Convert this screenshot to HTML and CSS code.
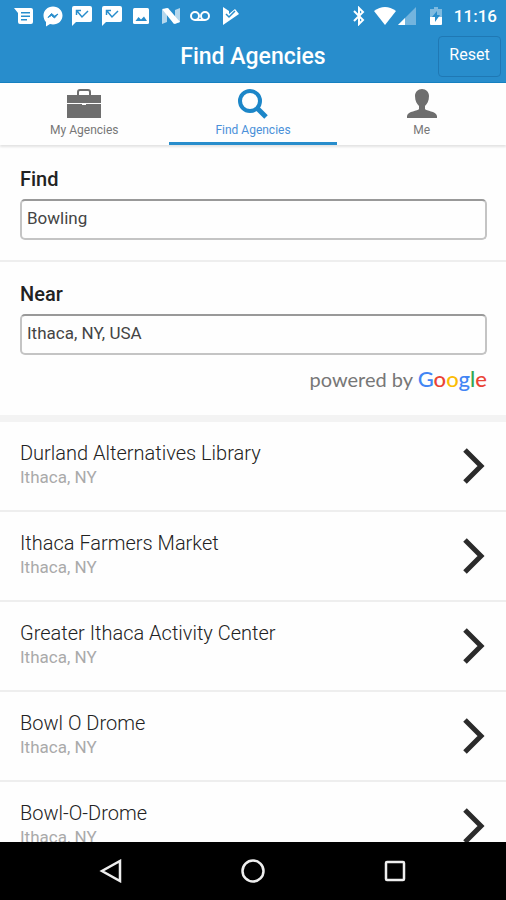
FILE: index.html
```html
<!DOCTYPE html>
<html lang="en">
<head>
    <meta charset="UTF-8">
    <meta name="viewport" content="width=device-width, initial-scale=1">
    <title>Find Agencies</title>
    <link rel="stylesheet" href="styles.css">
</head>
<body>
    <div id="app">
        <div class="status-bar">
            <div class="notifications">
                <svg viewBox="0 0 22 22"><path fill="#fff" fill-rule="evenodd" d="M2 3h17q2 0 2 2v12q0 2-2 2H8q-2 0-2-2V8zM9 7v1.500h9V7zM9 10.500V12h9v-1.500zM9 14v1.500h6V14z"/></svg>
                <svg viewBox="0 0 22 22"><path fill="#fff" d="M11 1.500c5.500 0 9.500 4 9.500 9s-4 9-9.500 9c-1 0-2-.1-3-.4L4 21.500V17c-1.600-1.600-2.500-4-2.500-6.500 0-5 4-9 9.500-9z"/><path d="M6 12.500l3.500-4 3 2.500 3.500-2-3.500 4-3-2.500z" fill="#288dcc" stroke="#288dcc"/></svg>
                <svg viewBox="0 0 22 22"><path fill="#fff" d="M3 1h16q2 0 2 2v12q0 2-2 2H5l-4 4V3q0-2 2-2z"/><path fill="none" stroke="#288dcc" stroke-width="1.500" d="M5.500 10V5.500H10M6 6l5 6 6-6"/></svg>
                <svg viewBox="0 0 22 22"><path fill="#fff" d="M3 1h16q2 0 2 2v12q0 2-2 2H5l-4 4V3q0-2 2-2z"/><path fill="none" stroke="#288dcc" stroke-width="1.500" d="M5.500 10V5.500H10M6 6l5 6 6-6"/></svg>
                <svg viewBox="0 0 22 22"><rect x="3" y="3" width="16" height="16" rx="1.500" fill="#fff"/><path fill="#288dcc" d="M5.500 16l3-4 2.500 2.500 3-3 3 4.500z"/></svg>
                <svg viewBox="0 0 22 22"><path fill="#fff" opacity=".65" d="M2 5l5-2v14l-5 2zM15 5l5-2v14l-5 2z"/><path fill="#fff" d="M2 4l6-1 12 14-6 2z"/></svg>
                <svg viewBox="0 0 22 22"><g fill="none" stroke="#fff" stroke-width="2"><circle cx="6" cy="11" r="4"/><circle cx="16" cy="11" r="4"/><path d="M6 15h10"/></g></svg>
                <svg viewBox="0 0 22 22"><path fill="#fff" d="M4 2l6 4v3l6-5 4 5L4 20z"/><path fill="none" stroke="#288dcc" stroke-width="1.500" d="M7 9l3 3 6-6"/></svg>
            </div>
            <div class="indicators">
                <svg width="12" height="20" viewBox="0 0 12 20"><path fill="none" stroke="#fff" stroke-width="2" d="M1 5l9 9-4 4V2l4 4-9 9"/></svg>
                <svg class="wifi" width="22" height="18" viewBox="0 0 22 18"><path fill="#fff" d="M0 4q11-8 22 0L11 18z"/></svg>
                <svg class="signal" width="18" height="18" viewBox="0 0 18 18"><path fill="#fff" opacity=".35" d="M18 0v18H0z"/><path fill="#fff" d="M7 11v7H0z"/></svg>
                <svg class="battery" width="12" height="18" viewBox="0 0 12 18"><path fill="#fff" opacity=".4" d="M4 0h4v2h4v8H0V2h4z"/><path fill="#fff" d="M0 10h12v7q0 1-1 1H1q-1 0-1-1z"/><path fill="#288dcc" d="M7 4l-5 6h3v5l5-7H7z"/></svg>
                <span class="clock">11:16</span>
            </div>
        </div>

        <header class="header">
            <h1>Find Agencies</h1>
            <button type="button" class="reset">Reset</button>
        </header>

        <nav class="tabs">
            <a href="#my-agencies">
                <svg width="36" height="32" viewBox="0 0 36 32"><path fill="none" stroke="#6e6e6e" stroke-width="2" d="M12 7V4q0-2 2-2h8q2 0 2 2v3"/><path fill="#6e6e6e" d="M1 7h34v8H1zM1 16h15v1h4v-1h15v14H1z"/></svg>
                <span>My Agencies</span>
            </a>
            <a href="#find" class="active">
                <svg width="36" height="32" viewBox="0 0 36 32"><g fill="none" stroke="#1c86c8" stroke-width="4"><circle cx="15" cy="13" r="10"/><path stroke-width="5" d="M22 20l9 9"/></g></svg>
                <span>Find Agencies</span>
            </a>
            <a href="#me">
                <svg width="36" height="32" viewBox="0 0 36 32"><path fill="#6e6e6e" d="M18 1c4 0 7 3 7 7 0 5-2 8-4 10v3c1 2 11 2 12 7v2H3v-2c1-5 11-5 12-7v-3c-2-2-4-5-4-10 0-4 3-7 7-7z"/></svg>
                <span>Me</span>
            </a>
        </nav>

        <main class="content">
            <form class="search">
                <div class="field">
                    <label for="find">Find</label>
                    <input type="text" id="find" value="Bowling">
                </div>
                <div class="field">
                    <label for="near">Near</label>
                    <input type="text" id="near" value="Ithaca, NY, USA">
                    <p class="powered">powered by <span class="google"><span class="blue">G</span><span class="red">o</span><span class="yellow">o</span><span class="blue">g</span><span class="green">l</span><span class="red">e</span></span></p>
                </div>
            </form>

            <ul class="results">
                <li><a href="#durland">
                    <div><h2>Durland Alternatives Library</h2><p>Ithaca, NY</p></div>
                    <svg width="22" height="36" viewBox="0 0 22 36"><path d="M2 2l16 16L2 34"/></svg>
                </a></li>
                <li><a href="#market">
                    <div><h2>Ithaca Farmers Market</h2><p>Ithaca, NY</p></div>
                    <svg width="22" height="36" viewBox="0 0 22 36"><path d="M2 2l16 16L2 34"/></svg>
                </a></li>
                <li><a href="#activity-center">
                    <div><h2>Greater Ithaca Activity Center</h2><p>Ithaca, NY</p></div>
                    <svg width="22" height="36" viewBox="0 0 22 36"><path d="M2 2l16 16L2 34"/></svg>
                </a></li>
                <li><a href="#bowl-o-drome">
                    <div><h2>Bowl O Drome</h2><p>Ithaca, NY</p></div>
                    <svg width="22" height="36" viewBox="0 0 22 36"><path d="M2 2l16 16L2 34"/></svg>
                </a></li>
                <li><a href="#bowl-o-drome-2">
                    <div><h2>Bowl-O-Drome</h2><p>Ithaca, NY</p></div>
                    <svg width="22" height="36" viewBox="0 0 22 36"><path d="M2 2l16 16L2 34"/></svg>
                </a></li>
            </ul>
        </main>

        <div class="nav-bar">
            <button type="button" aria-label="Back"><svg width="24" height="24" viewBox="0 0 24 24"><path d="M21 2v20L3 12z"/></svg></button>
            <button type="button" aria-label="Home"><svg width="24" height="24" viewBox="0 0 24 24"><circle cx="12" cy="12" r="10.500"/></svg></button>
            <button type="button" aria-label="Recent apps"><svg width="24" height="24" viewBox="0 0 24 24"><rect x="3" y="3" width="18" height="18" rx="1"/></svg></button>
        </div>
    </div>
</body>
</html>
```
FILE: styles.css
```css
* {
    box-sizing: border-box;
}

body {
    margin: 0;
    font-family: Roboto, "Liberation Sans", sans-serif;
    background-color: #fefefe;
    color: #222;
}

h1, h2, p, ul {
    margin: 0;
    padding: 0;
}

a {
    color: inherit;
    text-decoration: none;
}

#app {
    display: flex;
    flex-direction: column;
    height: 100vh;
}

.status-bar {
    display: flex;
    justify-content: space-between;
    align-items: center;
    height: 31px;
    padding: 0 9px 0 12px;
    background-color: #288dcc;
    color: white;
}

.notifications {
    display: flex;
    justify-content: space-between;
    width: 229px;
}

.notifications svg {
    width: 22px;
    height: 22px;
}

.indicators {
    display: flex;
    align-items: center;
}

.wifi {
    margin-left: 9px;
}

.signal {
    margin-left: 2px;
}

.battery {
    margin: 0 12px 0 14px;
}

.clock {
    font-size: 17px;
    font-weight: 500;
}

.header {
    position: relative;
    display: flex;
    justify-content: center;
    align-items: center;
    height: 52px;
    border-bottom: 1px solid #1580c0;
    background-color: #288dcc;
    color: white;
}

.header h1 {
    font-size: 23px;
    font-weight: 500;
}

.reset {
    position: absolute;
    top: 5px;
    right: 5px;
    width: 63px;
    height: 41px;
    padding: 0 0 4px;
    border: 1px solid #1f78b4;
    border-radius: 4px;
    background: none;
    color: white;
    font-family: inherit;
    font-size: 16px;
}

.tabs {
    display: flex;
    height: 62px;
    box-shadow: 0 2px 2px #e4e4e4;
    z-index: 1;
}

.tabs a {
    flex: 1;
    display: flex;
    flex-direction: column;
    align-items: center;
    padding-top: 5px;
    border-bottom: 3px solid #fefefe;
    color: #777;
    font-size: 12px;
    line-height: 20px;
}

.tabs .active {
    border-color: #288dcc;
    color: #4a90d9;
}

.content {
    flex: 1;
    min-height: 0;
    overflow: hidden;
}

.field {
    padding: 20px 19px 20px 20px;
    border-bottom: 2px solid #eee;
}

.field:first-child {
    padding-top: 22px;
}

.field:last-child {
    border-bottom: 7px solid #f3f3f3;
}

.field label {
    display: block;
    margin-bottom: 8px;
    font-size: 20px;
    font-weight: 500;
    line-height: 24px;
}

.field input {
    display: block;
    width: 100%;
    height: 41px;
    padding: 0 5px 3px;
    border: 2px solid #c4c4c4;
    border-top-color: #999;
    border-radius: 5px;
    background-color: #fefefe;
    color: #444;
    font-family: inherit;
    font-size: 17px;
}

.powered {
    margin-top: 8px;
    color: #777;
    font-family: Lato, sans-serif;
    font-size: 20px;
    line-height: 32px;
    text-align: right;
}

.google {
    font-size: 22px;
    font-weight: 500;
}

.blue {
    color: #4285f4;
}

.red {
    color: #ea4335;
}

.yellow {
    color: #fbbc05;
}

.green {
    color: #34a853;
}

.results {
    list-style: none;
}

.results a {
    display: flex;
    justify-content: space-between;
    align-items: center;
    height: 90px;
    padding: 0 21px 0 20px;
    border-bottom: 2px solid #eee;
}

.results div {
    padding-bottom: 4px;
}

.results h2 {
    font-size: 20px;
    font-weight: 300;
    line-height: 26px;
}

.results p {
    color: #aaa;
    font-size: 17px;
    line-height: 22px;
}

.results path {
    fill: none;
    stroke: #2b2b2b;
    stroke-width: 5;
}

.nav-bar {
    display: flex;
    justify-content: center;
    gap: 118px;
    height: 58px;
    background-color: black;
}

.nav-bar button {
    display: flex;
    align-items: center;
    padding: 0;
    border: none;
    background: none;
}

.nav-bar svg {
    fill: none;
    stroke: #eee;
    stroke-width: 2.5;
}
```
